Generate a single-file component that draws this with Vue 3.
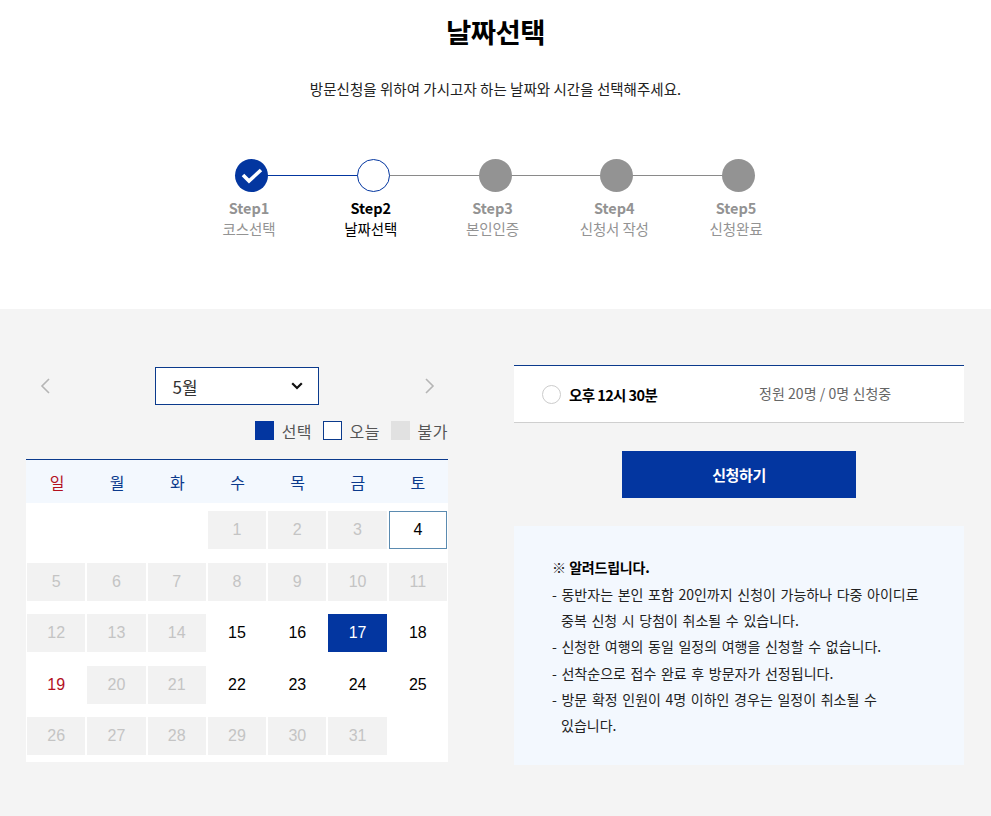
<template>
  <div class="page">
    <header class="top">
      <h1 class="title">날짜선택</h1>
      <p class="desc">방문신청을 위하여 가시고자 하는 날짜와 시간을 선택해주세요.</p>
      <ol class="steps">
        <li v-for="(s, i) in steps" :key="s.no" class="step" :class="{ done: i === 0, now: i === 1 }">
          <span class="dot">
            <svg v-if="i === 0" width="22" height="17" viewBox="0 0 22 17">
              <path d="M2 8 L8 14 L20 3" fill="none" stroke="#fff" stroke-width="3.6" />
            </svg>
          </span>
          <strong class="step-no">{{ s.no }}</strong>
          <span class="step-name">{{ s.name }}</span>
        </li>
      </ol>
    </header>

    <section class="body">
      <div class="left">
        <div class="month-bar">
          <svg class="arrow" width="12" height="18" viewBox="0 0 12 18">
            <path d="M10 2 L3 9 L10 16" fill="none" stroke="#b5b5b5" stroke-width="1.6" />
          </svg>
          <div class="month-select">
            <span>5월</span>
            <svg width="12" height="8" viewBox="0 0 12 8">
              <path d="M1.2 1.2 L6 6 L10.8 1.2" fill="none" stroke="#111" stroke-width="2.2" />
            </svg>
          </div>
          <svg class="arrow" width="12" height="18" viewBox="0 0 12 18">
            <path d="M2 2 L9 9 L2 16" fill="none" stroke="#b5b5b5" stroke-width="1.6" />
          </svg>
        </div>

        <div class="legend">
          <span class="box box-sel"></span><span class="legend-txt">선택</span>
          <span class="box box-today"></span><span class="legend-txt">오늘</span>
          <span class="box box-off"></span><span class="legend-txt">불가</span>
        </div>

        <div class="calendar">
          <div class="week">
            <span v-for="(w, i) in weekNames" :key="w" :class="{ sun: i === 0 }">{{ w }}</span>
          </div>
          <div class="days">
            <span v-for="n in 3" :key="'e' + n" class="day"></span>
            <span v-for="d in days" :key="d.n" class="day" :class="d.cls">{{ d.n }}</span>
          </div>
        </div>
      </div>

      <div class="right">
        <div class="time-row">
          <label class="time-pick">
            <span class="radio"></span>
            <b>오후 12시 30분</b>
          </label>
          <span class="capacity">정원 20명 / 0명 신청중</span>
        </div>
        <button class="apply" type="button">신청하기</button>
        <div class="notice">
          <p class="notice-head">※ <b>알려드립니다.</b></p>
          <p v-for="t in notices" :key="t[0]" class="notice-line">
            - {{ t[0] }}<span v-if="t[1]" class="cont">{{ t[1] }}</span>
          </p>
        </div>
      </div>
    </section>
  </div>
</template>

<script setup>
const steps = [
  { no: 'Step1', name: '코스선택' },
  { no: 'Step2', name: '날짜선택' },
  { no: 'Step3', name: '본인인증' },
  { no: 'Step4', name: '신청서 작성' },
  { no: 'Step5', name: '신청완료' }
]

const weekNames = ['일', '월', '화', '수', '목', '금', '토']

const open = [15, 16, 18, 22, 23, 24, 25]

const days = Array.from({ length: 31 }, (_, i) => {
  const n = i + 1
  let cls = 'off'
  if (n === 4) cls = 'today'
  else if (n === 17) cls = 'picked'
  else if (n === 19) cls = 'open sunday'
  else if (open.includes(n)) cls = 'open'
  return { n, cls }
})

// 第二项是换行后的内容
const notices = [
  ['동반자는 본인 포함 20인까지 신청이 가능하나 다중 아이디로', '중복 신청 시 당첨이 취소될 수 있습니다.'],
  ['신청한 여행의 동일 일정의 여행을 신청할 수 없습니다.'],
  ['선착순으로 접수 완료 후 방문자가 선정됩니다.'],
  ['방문 확정 인원이 4명 이하인 경우는 일정이 취소될 수', '있습니다.']
]
</script>

<style>
html, body {
  margin: 0;
  background: #f4f4f4;
}
</style>

<style scoped>
.page {
  font-family: "Noto Sans CJK KR", "Noto Sans", sans-serif;
  color: #111;
  min-height: 816px;
  overflow: hidden;
}

.top {
  background: #fff;
  height: 309px;
  box-sizing: border-box;
  padding-top: 10px;
  text-align: center;
}

.title {
  margin: 0;
  font-size: 27.5px;
  line-height: 42px;
  font-weight: 700;
  letter-spacing: -0.5px;
  color: #000;
}

.desc {
  margin: 26px 0 0;
  font-size: 14.5px;
  line-height: 22px;
  letter-spacing: 0.03px;
  color: #222;
}

.steps {
  list-style: none;
  display: flex;
  justify-content: center;
  margin: 59px 0 0;
  padding: 0 1px 0 0;
}

.step {
  position: relative;
  width: 121.75px;
  display: flex;
  flex-direction: column;
  align-items: center;
  color: #939393;
}

/* 连接线 */
.step:not(:last-child)::after {
  content: '';
  position: absolute;
  left: 50%;
  width: 100%;
  top: 16px;
  height: 1px;
  background: #8a8a8a;
}

.step.done::after {
  background: #0336a0 !important;
}

.dot {
  position: relative;
  z-index: 1;
  width: 33px;
  height: 33px;
  box-sizing: border-box;
  border-radius: 50%;
  background: #939393;
  display: flex;
  align-items: center;
  justify-content: center;
}

.done .dot {
  background: #0336a0;
}

.now .dot {
  background: #fff;
  border: 1px solid #0336a0;
}

.step-no {
  margin: 5px 5px 0 0;
  font-size: 14.5px;
  line-height: 21px;
  font-weight: 700;
}

.step-name {
  margin: 1px 5px 0 0;
  font-size: 14.5px;
  line-height: 20px;
  letter-spacing: -0.15px;
}

.now {
  color: #000;
}

.body {
  display: flex;
  align-items: flex-start;
  padding: 56px 27px 0 26px;
  justify-content: space-between;
}

.left {
  width: 422px;
  margin-top: 2px;
}

.month-bar {
  display: flex;
  align-items: center;
  justify-content: space-between;
  padding: 0 12px 0 13px;
}

.month-select {
  width: 164px;
  height: 38px;
  margin-right: 2px;
  box-sizing: border-box;
  border: 1px solid #0b3a8c;
  background: #fff;
  display: flex;
  align-items: center;
  justify-content: space-between;
  padding: 0 15px 0 17px;
  font-size: 17px;
  color: #333;
}

.legend {
  display: flex;
  align-items: center;
  justify-content: flex-end;
  margin-top: 16px;
  height: 19px;
  font-size: 16px;
  letter-spacing: 0.5px;
  color: #555;
}

.box {
  width: 19px;
  height: 19px;
  box-sizing: border-box;
  margin-right: 7.5px;
}

.box-sel {
  background: #0336a0;
}

.box-today {
  background: #fff;
  border: 1px solid #0b3a8c;
}

.box-off {
  background: #e1e1e1;
}

.legend-txt {
  margin-right: 11px;
}

.legend-txt:last-child {
  margin-right: 0;
}

.calendar {
  margin-top: 19px;
  background: #fff;
  border-top: 1px solid #0b3a8c;
}

.week {
  display: grid;
  grid-template-columns: repeat(7, 1fr);
  height: 43px;
  align-items: center;
  background: #f3f8fe;
  text-align: center;
  font-size: 16px;
  color: #0b3a8c;
  padding-left: 1px;
}

.week .sun {
  color: #b3101e;
}

.days {
  display: grid;
  grid-template-columns: repeat(7, 1fr);
  column-gap: 2px;
  row-gap: 13.6px;
  padding: 8px 1px 7px;
  font-family: "Liberation Sans", Arial, sans-serif;
  font-size: 16px;
}

.day {
  height: 38px;
  box-sizing: border-box;
  display: flex;
  align-items: center;
  justify-content: center;
  color: #000;
}

.day.off {
  background: #f2f2f2;
  color: #c4c4c4;
}

.day.today {
  border: 1px solid #5b8bb0;
}

.day.picked {
  background: #0336a0;
  color: #fff;
}

.day.sunday {
  color: #b3101e;
}

.right {
  width: 450px;
  text-align: center;
}

.time-row {
  display: flex;
  align-items: center;
  height: 58px;
  box-sizing: border-box;
  background: #fff;
  border-top: 1px solid #0b3a8c;
  border-bottom: 1px solid #cfcfcf;
  padding-left: 28px;
}

.time-pick {
  display: flex;
  align-items: center;
  width: 217px;
  font-size: 14.5px;
  letter-spacing: -0.6px;
  color: #000;
}

.radio {
  width: 19px;
  height: 19px;
  box-sizing: border-box;
  border: 1px solid #ccc;
  border-radius: 50%;
  margin-right: 8px;
}

.capacity {
  margin-top: -3px;
  font-size: 14px;
  letter-spacing: 0.05px;
  color: #666;
}

.apply {
  display: block;
  width: 234px;
  height: 47px;
  margin: 28px auto 28px;
  border: 0;
  background: #0336a0;
  color: #fff;
  font-family: inherit;
  font-size: 15px;
  font-weight: 700;
  letter-spacing: -0.4px;
}

.notice {
  height: 239px;
  box-sizing: border-box;
  background: #f3f8fe;
  padding: 28px 0 0 38px;
  text-align: left;
  font-size: 14px;
  line-height: 26.3px;
  word-spacing: 1.5px;
  color: #222;
}

.notice p {
  margin: 0;
  white-space: nowrap;
}

.notice-head {
  margin-bottom: 0.5px !important;
  word-spacing: 0;
}

.notice-head b {
  color: #000;
  letter-spacing: -0.2px;
}

.cont {
  display: block;
  padding-left: 9px;
}
</style>
